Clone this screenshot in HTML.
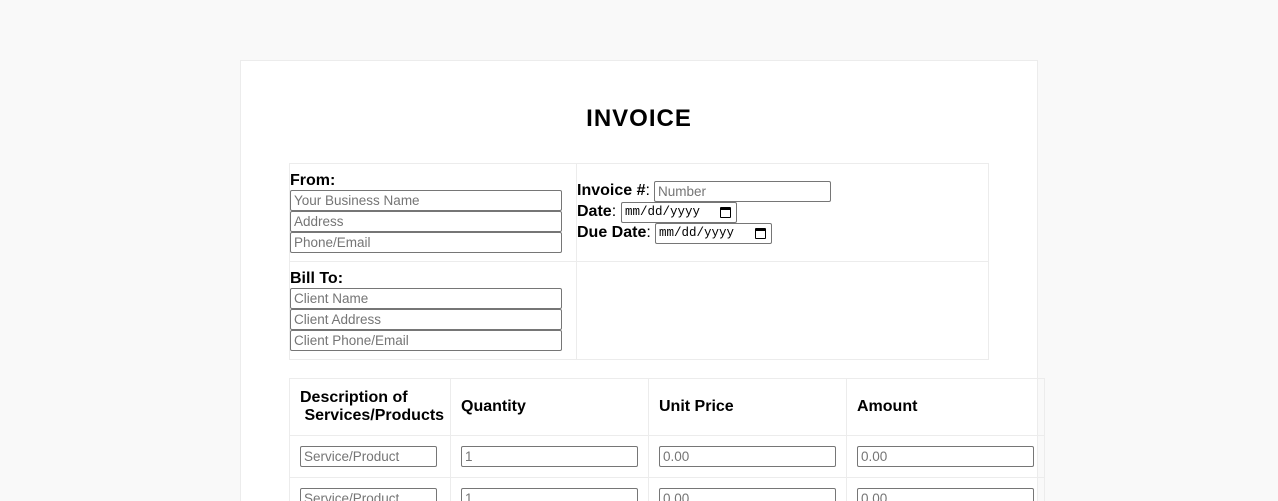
<!DOCTYPE html>
<html><head><style>
*{box-sizing:border-box;margin:0;padding:0}
html{width:1278px;height:501px;overflow:hidden}
body{width:1278px;height:501px;background:#f9f9f9;font-family:"Liberation Sans",Arial,sans-serif;position:relative;overflow:hidden}
.card{position:absolute;left:240px;top:60px;width:798px;height:441px;background:#fff;border:1px solid #ececec;border-bottom:none}
.a{position:absolute}
.b{font-weight:bold;font-size:16px;color:#000;white-space:nowrap}
.in{position:absolute;border:1px solid #767676;border-radius:2px;height:21px;font-size:13.5px;color:#757575;padding:1px 3px;line-height:17px;background:#fff;white-space:nowrap;overflow:hidden}
.ln{position:absolute;background:#ececec}
.date{font-family:"Liberation Mono",monospace;font-size:12.5px;color:#000;padding-left:3px}
.cal{position:absolute;right:5px;top:4px;width:11px;height:11px;border:1.5px solid #000;border-top-width:3px;border-radius:1px}
</style></head><body>
<div class="card"></div>
<div class="a" style="left:0;width:1278px;top:105px;text-align:center;font-weight:bold;font-size:24px;letter-spacing:1px">INVOICE</div>
<div class="ln" style="left:289px;top:163px;width:700px;height:1px"></div>
<div class="ln" style="left:289px;top:261px;width:700px;height:1px"></div>
<div class="ln" style="left:289px;top:359px;width:700px;height:1px"></div>
<div class="ln" style="left:289px;top:163px;width:1px;height:197px"></div>
<div class="ln" style="left:576px;top:163px;width:1px;height:197px"></div>
<div class="ln" style="left:988px;top:163px;width:1px;height:197px"></div>
<div class="a b" style="left:290px;top:172px">From:</div>
<div class="in" style="left:290px;top:190px;width:272px">Your Business Name</div>
<div class="in" style="left:290px;top:211px;width:272px">Address</div>
<div class="in" style="left:290px;top:232px;width:272px">Phone/Email</div>
<div class="a b" style="left:290px;top:270px">Bill To:</div>
<div class="in" style="left:290px;top:288px;width:272px">Client Name</div>
<div class="in" style="left:290px;top:309px;width:272px">Client Address</div>
<div class="in" style="left:290px;top:330px;width:272px">Client Phone/Email</div>
<div class="a b" style="left:577px;top:182px">Invoice #<span style="font-weight:normal">:</span></div>
<div class="in" style="left:654px;top:181px;width:177px">Number</div>
<div class="a b" style="left:577px;top:203px">Date<span style="font-weight:normal">:</span></div>
<div class="in date" style="left:621px;top:202px;width:116px">mm/dd/yyyy<span class="cal"></span></div>
<div class="a b" style="left:577px;top:224px">Due Date<span style="font-weight:normal">:</span></div>
<div class="in date" style="left:655px;top:223px;width:117px">mm/dd/yyyy<span class="cal"></span></div>
<div class="ln" style="left:289px;top:378px;width:756px;height:1px"></div>
<div class="ln" style="left:289px;top:435px;width:756px;height:1px"></div>
<div class="ln" style="left:289px;top:477px;width:756px;height:1px"></div>
<div class="ln" style="left:289px;top:378px;width:1px;height:130px"></div>
<div class="ln" style="left:450px;top:378px;width:1px;height:130px"></div>
<div class="ln" style="left:648px;top:378px;width:1px;height:130px"></div>
<div class="ln" style="left:846px;top:378px;width:1px;height:130px"></div>
<div class="ln" style="left:1044px;top:378px;width:1px;height:130px"></div>
<div class="a b" style="left:300px;top:389px;line-height:18px">Description of<br>&nbsp;Services/Products</div>
<div class="a b" style="left:461px;top:398px">Quantity</div>
<div class="a b" style="left:659px;top:398px">Unit Price</div>
<div class="a b" style="left:857px;top:398px">Amount</div>
<div class="in" style="left:300px;top:446px;width:137px">Service/Product</div>
<div class="in" style="left:461px;top:446px;width:177px">1</div>
<div class="in" style="left:659px;top:446px;width:177px">0.00</div>
<div class="in" style="left:857px;top:446px;width:177px">0.00</div>
<div class="in" style="left:300px;top:488px;width:137px">Service/Product</div>
<div class="in" style="left:461px;top:488px;width:177px">1</div>
<div class="in" style="left:659px;top:488px;width:177px">0.00</div>
<div class="in" style="left:857px;top:488px;width:177px">0.00</div>
</body></html>
